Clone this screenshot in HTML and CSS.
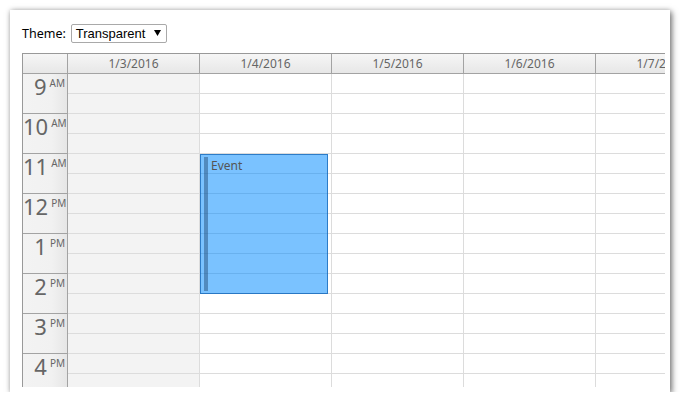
FILE: index.html
```html
<!DOCTYPE html>
<html>
<head>
<meta charset="utf-8">
<link rel="stylesheet" href="styles.css">
</head>
<body>
<div class="card">
  <div class="toolbar">
    <span class="label">Theme:</span>
    <div class="select"><span>Transparent</span><svg class="arrow" width="7" height="6" viewBox="0 0 7 6"><path d="M0 0H7L3.5 6Z" fill="#000"/></svg></div>
  </div>
  <div class="cal">
    <div class="inner">
      <div class="head">
        <div class="corner"></div>
        <div class="colh">1/3/2016</div>
        <div class="colh">1/4/2016</div>
        <div class="colh">1/5/2016</div>
        <div class="colh">1/6/2016</div>
        <div class="colh">1/7/2016</div>
      </div>
      <div class="body">
        <div class="rowheads">
          <div class="rowh"><span class="hr">9</span><span class="mn">AM</span></div>
          <div class="rowh"><span class="hr">10</span><span class="mn">AM</span></div>
          <div class="rowh"><span class="hr">11</span><span class="mn">AM</span></div>
          <div class="rowh"><span class="hr">12</span><span class="mn">PM</span></div>
          <div class="rowh"><span class="hr">1</span><span class="mn">PM</span></div>
          <div class="rowh"><span class="hr">2</span><span class="mn">PM</span></div>
          <div class="rowh"><span class="hr">3</span><span class="mn">PM</span></div>
          <div class="rowh"><span class="hr">4</span><span class="mn">PM</span></div>
        </div>
        <div class="day off">
          <div class="cell"></div><div class="cell"></div><div class="cell"></div><div class="cell"></div>
          <div class="cell"></div><div class="cell"></div><div class="cell"></div><div class="cell"></div>
          <div class="cell"></div><div class="cell"></div><div class="cell"></div><div class="cell"></div>
          <div class="cell"></div><div class="cell"></div><div class="cell"></div><div class="cell"></div>
        </div>
        <div class="day">
          <div class="cell"></div><div class="cell"></div><div class="cell"></div><div class="cell"></div>
          <div class="cell"></div><div class="cell"></div><div class="cell"></div><div class="cell"></div>
          <div class="cell"></div><div class="cell"></div><div class="cell"></div><div class="cell"></div>
          <div class="cell"></div><div class="cell"></div><div class="cell"></div><div class="cell"></div>
          <div class="event"><div class="bar"></div><span class="etext">Event</span></div>
        </div>
        <div class="day">
          <div class="cell"></div><div class="cell"></div><div class="cell"></div><div class="cell"></div>
          <div class="cell"></div><div class="cell"></div><div class="cell"></div><div class="cell"></div>
          <div class="cell"></div><div class="cell"></div><div class="cell"></div><div class="cell"></div>
          <div class="cell"></div><div class="cell"></div><div class="cell"></div><div class="cell"></div>
        </div>
        <div class="day">
          <div class="cell"></div><div class="cell"></div><div class="cell"></div><div class="cell"></div>
          <div class="cell"></div><div class="cell"></div><div class="cell"></div><div class="cell"></div>
          <div class="cell"></div><div class="cell"></div><div class="cell"></div><div class="cell"></div>
          <div class="cell"></div><div class="cell"></div><div class="cell"></div><div class="cell"></div>
        </div>
        <div class="day">
          <div class="cell"></div><div class="cell"></div><div class="cell"></div><div class="cell"></div>
          <div class="cell"></div><div class="cell"></div><div class="cell"></div><div class="cell"></div>
          <div class="cell"></div><div class="cell"></div><div class="cell"></div><div class="cell"></div>
          <div class="cell"></div><div class="cell"></div><div class="cell"></div><div class="cell"></div>
        </div>
      </div>
    </div>
  </div>
</div>
</body>
</html>
```
FILE: styles.css
```css
html, body {
  margin: 0;
  padding: 0;
  background: #fff;
}
body {
  font-family: "Noto Sans", "Open Sans", sans-serif;
}
.card {
  box-sizing: border-box;
  margin: 10px 0 0 10px;
  width: 660px;
  height: 382px;
  background: #fff;
  box-shadow: 2px 2px 6px rgba(0, 0, 0, 0.5), 0 0 5px rgba(0, 0, 0, 0.18);
  padding: 14px 5px 5px 12px;
}
.toolbar {
  display: flex;
  align-items: center;
  gap: 5px;
  height: 19px;
  margin-bottom: 10px;
}
.label {
  font-size: 12.5px;
  color: #000;
  line-height: 19px;
}
.select {
  box-sizing: border-box;
  width: 96px;
  height: 19px;
  border: 1px solid #a9a9a9;
  border-radius: 2px;
  display: flex;
  align-items: center;
  justify-content: space-between;
  padding: 0 5px 0 4px;
  font-family: "Liberation Sans", Arial, sans-serif;
  font-size: 13px;
  color: #000;
}
.arrow {
  display: block;
  margin-top: -1px;
}
.cal {
  width: 643px;
  height: 334px;
  box-sizing: border-box;
  border-left: 1px solid #999;
  border-top: 1px solid #999;
  overflow: hidden;
}
.inner {
  width: 800px;
}
.head {
  display: flex;
  height: 20px;
}
.corner, .colh {
  box-sizing: border-box;
  height: 20px;
  border-right: 1px solid #a3a3a3;
  border-bottom: 1px solid #a3a3a3;
  background: linear-gradient(to bottom, #f6f6f6, #e7e7e7);
}
.corner {
  width: 45px;
}
.colh {
  width: 132px;
  display: flex;
  align-items: center;
  justify-content: center;
  font-size: 12px;
  color: #666;
}
.body {
  display: flex;
}
.rowheads {
  width: 45px;
}
.rowh {
  box-sizing: border-box;
  height: 40px;
  border-right: 1px solid #a3a3a3;
  border-bottom: 1px solid #a3a3a3;
  background: linear-gradient(to right, #f3f3f3 0%, #f1f1f1 65%, #e6e6e6 100%);
  text-align: right;
  padding: 1px 2px 0 0;
  color: #666;
  line-height: 22px;
}
.hr {
  font-size: 22px;
  vertical-align: top;
}
.mn {
  font-size: 10px;
  line-height: 12px;
  vertical-align: top;
  padding-left: 3px;
  padding-right: 0;
  position: relative;
  top: 2px;
}
.day {
  width: 132px;
  position: relative;
  background: #fff;
}
.day.off {
  background: #f3f3f3;
}
.cell {
  box-sizing: border-box;
  height: 20px;
  border-right: 1px solid #dcdcdc;
  border-bottom: 1px solid #dcdcdc;
}
.event {
  position: absolute;
  left: 0;
  top: 80px;
  width: 128px;
  height: 140px;
  box-sizing: border-box;
  border: 1px solid rgba(20, 100, 180, 0.75);
  background: rgba(0, 138, 255, 0.52);
  padding: 3px 2px 2px 10px;
  font-size: 12px;
  line-height: 16px;
  color: #555;
}
.bar {
  position: absolute;
  left: 3px;
  top: 2px;
  bottom: 2px;
  width: 4px;
  background: rgba(30, 70, 110, 0.45);
}
.etext {
  position: relative;
}
```
